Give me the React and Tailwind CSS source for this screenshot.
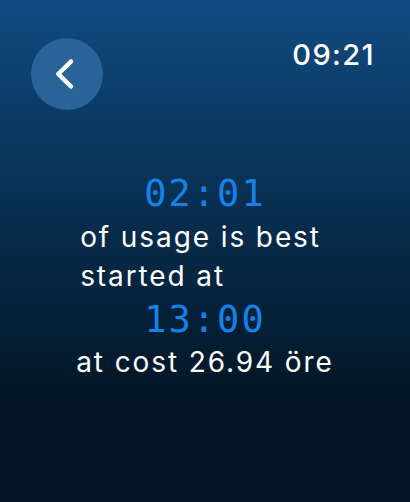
export default function App() {
  return (
    <div
      className="w-[410px] h-[502px] overflow-hidden bg-linear-to-b from-[#104b81] to-[#031626] to-80% text-white"
      style={{ fontFamily: 'Inter, "Noto Sans", sans-serif' }}
    >
      <div className="flex items-start justify-between pl-[31px] pr-[35px] pt-[38px]">
        <button className="w-[72px] h-[72px] rounded-full bg-[#2a6398]">
          <svg width="72" height="72" viewBox="0 0 72 72" fill="none">
            <path
              d="M40 23.5 L27.3 36 L40 48.5"
              stroke="white"
              strokeWidth="4.5"
              strokeLinecap="round"
              strokeLinejoin="round"
            />
          </svg>
        </button>
        <div className="text-[29px] font-medium leading-none mt-[2px] tracking-[1.4px]">09:21</div>
      </div>

      <div className="flex flex-col items-center mt-[64px]">
        <div
          className="text-[37px] leading-[40px] text-[#1681e8] tracking-[2px]"
          style={{ fontFamily: '"DejaVu Sans Mono", monospace' }}
        >
          02:01
        </div>
        <div className="text-[28px] leading-[39px] tracking-[1.9px] text-left -ml-[9px] mt-[4px]">
          of usage is best
          <br />
          started at
        </div>
        <div
          className="text-[37px] leading-[40px] text-[#1681e8] tracking-[2px] mt-[4px]"
          style={{ fontFamily: '"DejaVu Sans Mono", monospace' }}
        >
          13:00
        </div>
        <div className="text-[28px] leading-[39px] tracking-[1.9px] mt-[3px]">at cost 26.94 öre</div>
      </div>
    </div>
  )
}
